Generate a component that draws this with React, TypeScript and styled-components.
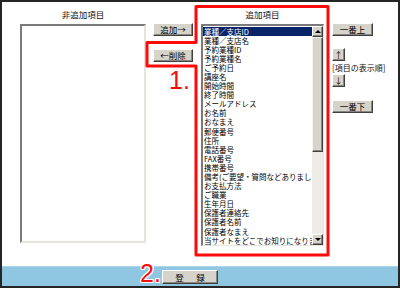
import React from 'react';
import styled, { createGlobalStyle } from 'styled-components';

const GlobalStyle = createGlobalStyle`
  html, body {
    margin: 0;
    padding: 0;
    background: #ffffff;
  }
  body {
    font-family: "Noto Sans CJK JP", "Liberation Sans", sans-serif;
  }
`;

const addedItems = [
  '業種／支店ID',
  '業種／支店名',
  '予約業種ID',
  '予約業種名',
  'ご予約日',
  '講座名',
  '開始時間',
  '終了時間',
  'メールアドレス',
  'お名前',
  'おなまえ',
  '郵便番号',
  '住所',
  '電話番号',
  'FAX番号',
  '携帯番号',
  '備考(ご要望・質問などありましたら)',
  'お支払方法',
  'ご職業',
  '生年月日',
  '保護者連絡先',
  '保護者名前',
  '保護者なまえ',
  '当サイトをどこでお知りになりましたか',
];

function App() {
  return (
    <Page>
      <GlobalStyle />
      <Frame>
        <Main>
          <ListColumn>
            <ColumnTitle>非追加項目</ColumnTitle>
            <EmptyList />
          </ListColumn>

          <ButtonColumn>
            <WinButton w={40}>追加→</WinButton>
            <WinButton w={40} top={13}>←削除</WinButton>
          </ButtonColumn>

          <ListColumn>
            <ColumnTitle>追加項目</ColumnTitle>
            <AddedList>
              <Items>
                {addedItems.map((item, i) => (
                  <Item key={item} selected={i === 0}>{item}</Item>
                ))}
              </Items>
              <ScrollBar>
                <ArrowButton><Triangle dir="up" /></ArrowButton>
                <Thumb />
                <Track />
                <ArrowButton><Triangle dir="down" /></ArrowButton>
              </ScrollBar>
            </AddedList>
          </ListColumn>

          <OrderColumn>
            <WinButton w={41}>一番上</WinButton>
            <WinButton w={13} top={12}>↑</WinButton>
            <OrderLabel>[項目の表示順]</OrderLabel>
            <WinButton w={13}>↓</WinButton>
            <WinButton w={41} top={13}>一番下</WinButton>
          </OrderColumn>
        </Main>

        <Footer>
          <WinButton w={56} h={14}>
            <Spaced>登　録</Spaced>
          </WinButton>
        </Footer>
      </Frame>

      <Outline width="400" height="288" viewBox="0 0 400 288">
        <path
          d="M196 6.5 H328 V255 H196 V66 H147 V42.5 H196 Z"
          fill="none"
          stroke="#ff0a0a"
          strokeWidth="3"
          strokeLinejoin="round"
        />
      </Outline>
      <StepMark x={169} y={68}>1.</StepMark>
      <StepMark x={140} y={261}>2.</StepMark>
    </Page>
  );
}

export default App;

const Page = styled.div`
  position: relative;
  width: 400px;
  height: 288px;
  overflow: hidden;
`;

const Frame = styled.div`
  box-sizing: border-box;
  width: 400px;
  height: 288px;
  border: 2px solid #252525;
  background: #ffffff;
  display: flex;
  flex-direction: column;
`;

const Main = styled.div`
  flex: 1;
  display: flex;
  align-items: flex-start;
  padding-left: 18px;
`;

const ListColumn = styled.div`
  flex: none;
  display: flex;
  flex-direction: column;
  align-items: stretch;
  margin-right: 7px;
`;

const ColumnTitle = styled.div`
  height: 22px;
  line-height: 24px;
  font-size: 8.5px;
  color: #111;
  text-align: center;
`;

const EmptyList = styled.div`
  box-sizing: border-box;
  width: 126px;
  height: 219px;
  background: #ffffff;
  border-style: solid;
  border-width: 2px;
  border-color: #7a7a7a #e6e4dc #e6e4dc #7a7a7a;
`;

const ButtonColumn = styled.div`
  flex: none;
  width: 40px;
  display: flex;
  flex-direction: column;
  align-items: flex-start;
  padding-top: 21px;
  margin-right: 8px;
`;

const OrderColumn = styled.div`
  flex: none;
  display: flex;
  flex-direction: column;
  align-items: flex-start;
  padding-top: 21px;
  margin-left: 1px;
`;

const WinButton = styled.div<{ w: number; h?: number; top?: number }>`
  box-sizing: border-box;
  flex: none;
  width: ${({ w }) => w}px;
  height: ${({ h }) => h || 13}px;
  margin-top: ${({ top }) => top || 0}px;
  background: #d6d3cb;
  border: 1px solid;
  border-color: #ffffff #404040 #404040 #ffffff;
  box-shadow: inset -1px -1px 0 #8a8780;
  display: flex;
  align-items: center;
  justify-content: center;
  font-size: 8.5px;
  line-height: 1;
  color: #000;
  white-space: nowrap;
  overflow: hidden;
`;

const Spaced = styled.span`
  letter-spacing: 2px;
  padding-left: 2px;
`;

const OrderLabel = styled.div`
  height: 13px;
  line-height: 13px;
  font-size: 8px;
  color: #111;
  white-space: nowrap;
`;

const AddedList = styled.div`
  box-sizing: border-box;
  width: 123px;
  height: 222px;
  background: #ffffff;
  border-style: solid;
  border-width: 2px 1px 1px 2px;
  border-color: #7a7a7a #e6e4dc #e6e4dc #7a7a7a;
  display: flex;
`;

const Items = styled.div`
  flex: 1;
  min-width: 0;
  overflow: hidden;
  padding-top: 0.5px;
`;

const Item = styled.div<{ selected: boolean }>`
  height: 9.1px;
  line-height: 9.1px;
  font-size: 7.5px;
  white-space: nowrap;
  overflow: hidden;
  padding-left: 1px;
  color: ${({ selected }) => (selected ? '#ffffff' : '#000000')};
  background: ${({ selected }) => (selected ? '#0a246a' : 'transparent')};
`;

const ScrollBar = styled.div`
  flex: none;
  width: 11px;
  display: flex;
  flex-direction: column;
  background: #eeece6;
`;

const ArrowButton = styled.div`
  box-sizing: border-box;
  width: 11px;
  height: 11px;
  background: #d6d3cb;
  border: 1px solid;
  border-color: #ffffff #404040 #404040 #ffffff;
  box-shadow: inset -1px -1px 0 #8a8780;
  display: flex;
  align-items: center;
  justify-content: center;
`;

const Triangle = styled.div<{ dir: 'up' | 'down' }>`
  width: 0;
  height: 0;
  border-left: 3px solid transparent;
  border-right: 3px solid transparent;
  ${({ dir }) =>
    dir === 'up' ? 'border-bottom: 3px solid #000;' : 'border-top: 3px solid #000;'}
`;

const Thumb = styled.div`
  box-sizing: border-box;
  height: 115px;
  background: #d6d3cb;
  border: 1px solid;
  border-color: #f4f3ee #404040 #404040 #f4f3ee;
  box-shadow: inset -1px -1px 0 #8a8780;
`;

const Track = styled.div`
  flex: 1;
  background: #eeece6;
`;

const Footer = styled.div`
  box-sizing: border-box;
  height: 20px;
  background: #8fc6e2;
  border-top: 1px solid #a9d4ea;
  padding: 3px 0 0 160px;
`;

const Outline = styled.svg`
  position: absolute;
  left: 0;
  top: 0;
  pointer-events: none;
`;

const StepMark = styled.div<{ x: number; y: number }>`
  position: absolute;
  left: ${({ x }) => x}px;
  top: ${({ y }) => y}px;
  font-family: "Liberation Sans", Arial, sans-serif;
  font-size: 25px;
  line-height: 25px;
  color: #ff0a0a;
  text-shadow: 1px 0 0 #fff, -1px 0 0 #fff, 0 1px 0 #fff, 0 -1px 0 #fff,
    1px 1px 0 #fff, -1px -1px 0 #fff, 1px -1px 0 #fff, -1px 1px 0 #fff;
`;
